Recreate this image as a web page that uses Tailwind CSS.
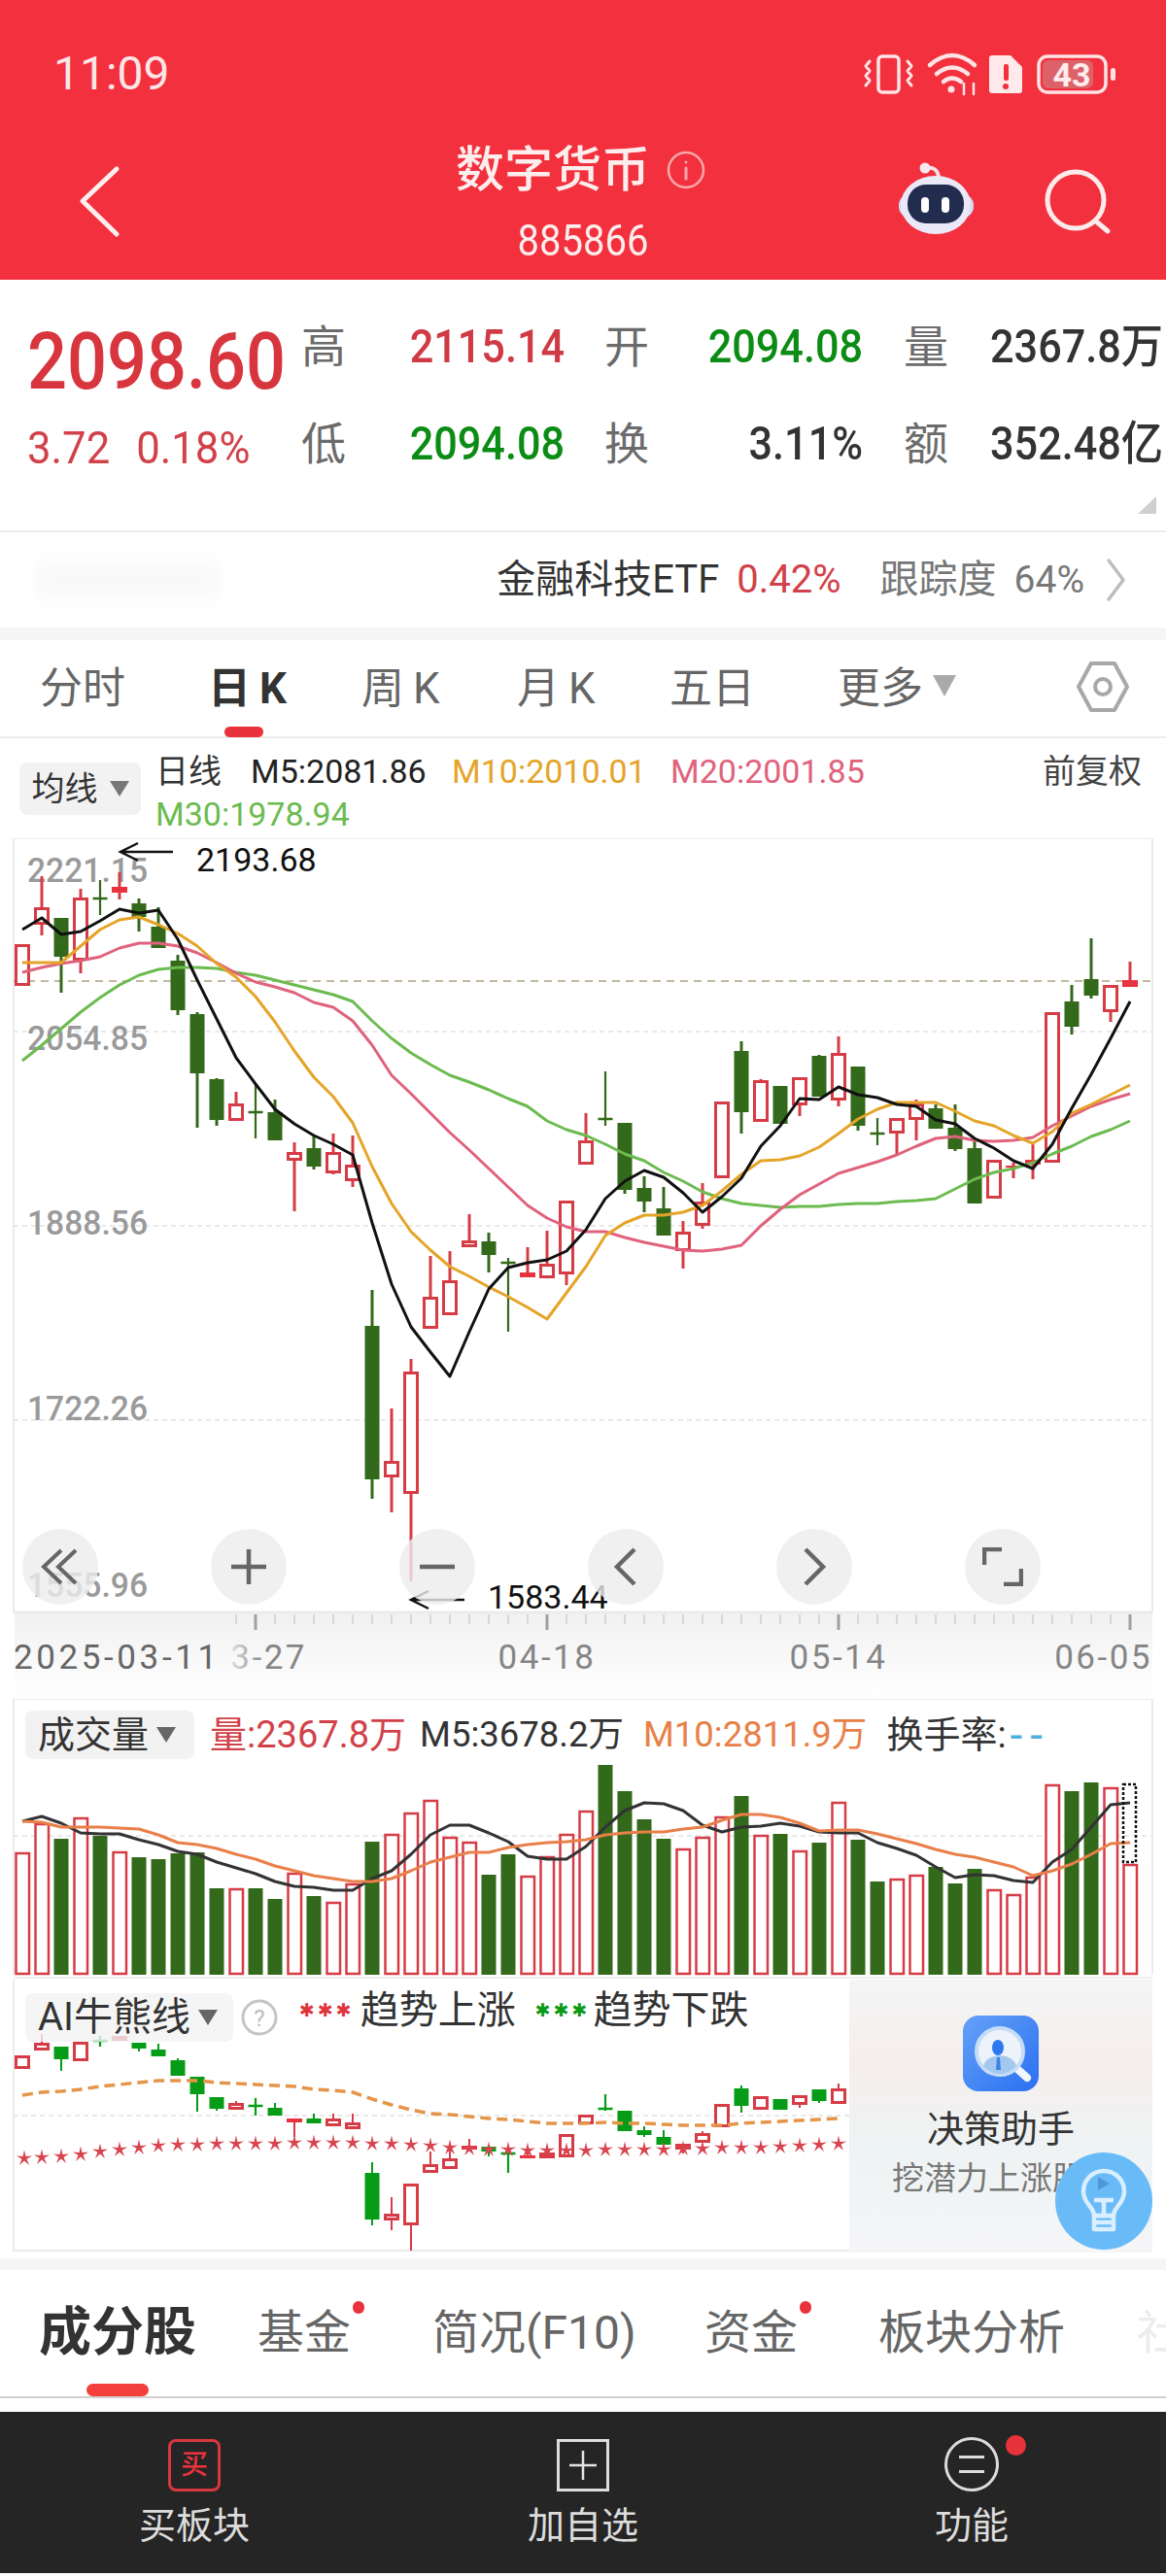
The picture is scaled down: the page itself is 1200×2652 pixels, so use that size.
<!DOCTYPE html>
<html lang="zh">
<head>
    <meta charset="UTF-8">
    <meta name="viewport" content="width=device-width, initial-scale=1.0">
    <title>数字货币</title>
    <script src="https://cdn.jsdelivr.net/npm/@tailwindcss/browser@4"></script>
</head>
<body class="bg-white font-['Roboto','Noto_Sans_CJK_SC',sans-serif]">
<div class="w-[1200px] h-[2652px] overflow-hidden flex flex-col">

    <!-- header -->
    <header class="relative h-[288px] shrink-0 bg-[#f3303d] text-white flex flex-col">
        <div class="h-[150px] flex items-start justify-between pl-[55px] pr-[50px] pt-[50px]">
            <span class="text-[48px] leading-[52px] text-[#fbe6e7]">11:09</span>
            <svg width="290" height="70" viewBox="880 40 290 70" class="-mt-[10px] -mr-[20px]" fill="none" stroke="#ffe4e6" stroke-linecap="round" stroke-linejoin="round">
                <rect x="904" y="58" width="21" height="37" rx="4" stroke-width="3.5"/>
                <path d="M895 63l-4 5 4 5-4 5 4 5-4 5M934 63l4 5-4 5 4 5-4 5 4 5" stroke-width="3"/>
                <path d="M957 67q23-20 46 0M964 76q16-13 32 0M971 84q9-7 18 0" stroke-width="4.5"/>
                <circle cx="979" cy="92" r="3.5" fill="#ffe4e6" stroke="none"/>
                <path d="M992 86v11M1002 86v11" stroke-width="2.5"/>
                <path d="M1018 60a3 3 0 0 1 3-3h19l12 12v24a3 3 0 0 1-3 3h-28a3 3 0 0 1-3-3z" fill="#ffe9ea" stroke="none"/>
                <rect x="1033" y="66" width="5" height="17" rx="2" fill="#f3303d" stroke="none"/>
                <circle cx="1035" cy="89" r="3" fill="#f3303d" stroke="none"/>
                <rect x="1069" y="58" width="69" height="37" rx="9" stroke-width="3.5"/>
                <rect x="1073" y="62" width="52" height="29" rx="6" fill="#dd6169" stroke="none"/>
                <rect x="1143" y="70" width="5" height="13" rx="2.5" fill="#ffe4e6" stroke="none"/>
                <text x="1103" y="89" text-anchor="middle" font-size="34" font-weight="700" fill="#ffecec" stroke="none">43</text>
            </svg>
        </div>
        <div class="flex-1 flex flex-col items-center">
            <div class="flex items-center h-[50px] mr-[4px]">
                <span class="text-[50px] leading-[50px] font-medium text-[#fdeeee]">数字货币</span>
                <svg width="42" height="42" viewBox="0 0 42 42" class="ml-[16px]" fill="none" stroke="#f8a7ab" stroke-width="2.5" stroke-linecap="round">
                    <circle cx="21" cy="21" r="18"/><path d="M21 19v11" stroke-width="3"/><circle cx="21" cy="13" r="1.5" fill="#f8a7ab" stroke="none"/>
                </svg>
            </div>
            <span class="text-[40px] leading-[46px] mt-[26px] text-[#fdeeee] scale-y-110">885866</span>
        </div>
        <svg class="absolute left-[78px] top-[168px]" width="50" height="78" viewBox="0 0 50 78" fill="none" stroke="#fdeeee" stroke-width="5" stroke-linecap="round" stroke-linejoin="round">
            <path d="M42 6L7 39l35 34"/>
        </svg>
        <svg class="absolute left-[920px] top-[165px]" width="90" height="80" viewBox="920 165 90 80">
            <path d="M953 173q12-2 13 10" fill="none" stroke="#f3dfe6" stroke-width="4"/>
            <circle cx="952" cy="173" r="5.5" fill="#f6e8ee"/>
            <rect x="925" y="200" width="77" height="24" rx="11" fill="#d6d8f2"/>
            <ellipse cx="963" cy="211" rx="36" ry="30" fill="#ebe9f8"/>
            <rect x="934" y="190" width="58" height="40" rx="19" fill="#212c4e"/>
            <rect x="948" y="203" width="8" height="16" rx="4" fill="#fff"/>
            <rect x="969" y="203" width="8" height="16" rx="4" fill="#fff"/>
        </svg>
        <svg class="absolute left-[1070px] top-[170px]" width="80" height="76" viewBox="1070 170 80 76" fill="none" stroke="#ffeaec" stroke-width="5" stroke-linecap="round">
            <circle cx="1107" cy="206" r="29"/><path d="M1127 227l13 11"/>
        </svg>
    </header>

    <!-- quote -->
    <section class="relative h-[260px] shrink-0 flex border-b-2 border-[#ececec]">
        <div class="w-[312px] shrink-0 pl-[28px] pt-[44px] text-[#d8363f]">
            <div class="text-[82px] leading-[80px] font-medium origin-left scale-x-[.88] whitespace-nowrap">2098.60</div>
            <div class="mt-[24px] flex text-[47px] leading-[50px] origin-left scale-x-[.93] whitespace-nowrap text-[#d2414a]">
                <span>3.72</span><span class="ml-[29px]">0.18%</span>
            </div>
        </div>
        <div class="grid grid-cols-[45px_224px_87px_220px_88px_221px] grid-rows-[100px_100px] pt-[19px] items-center text-[48px] font-medium leading-none">
            <span class="text-[#6b6b6b] text-[46px] font-normal -ml-[2px]">高</span>
            <span class="text-right text-[#cf3a44] origin-right scale-x-[.9]">2115.14</span>
            <span class="text-right text-[#6b6b6b] text-[46px] font-normal">开</span>
            <span class="text-right text-[#0b8c14] origin-right scale-x-[.9]">2094.08</span>
            <span class="text-right text-[#6b6b6b] text-[46px] font-normal">量</span>
            <span class="text-right text-[#333] origin-right scale-x-[.9] whitespace-nowrap">2367.8万</span>
            <span class="text-[#6b6b6b] text-[46px] font-normal -ml-[2px]">低</span>
            <span class="text-right text-[#0b8c14] origin-right scale-x-[.9]">2094.08</span>
            <span class="text-right text-[#6b6b6b] text-[46px] font-normal">换</span>
            <span class="text-right text-[#333] origin-right scale-x-[.9]">3.11%</span>
            <span class="text-right text-[#6b6b6b] text-[46px] font-normal">额</span>
            <span class="text-right text-[#333] origin-right scale-x-[.9] whitespace-nowrap">352.48亿</span>
        </div>
        <svg class="absolute right-[8px] bottom-[16px]" width="22" height="20" viewBox="0 0 22 20"><path d="M20 1v18H1z" fill="#cfcfcf"/></svg>
    </section>

    <!-- tracking ETF -->
    <section class="relative h-[98px] shrink-0 flex items-center justify-end pr-[40px] text-[40px] leading-none">
        <div class="absolute left-[36px] top-[30px] w-[190px] h-[38px] bg-[#f9f9f9] blur-sm"></div>
        <span class="text-[#333]">金融科技ETF</span>
        <span class="ml-[18px] text-[#d2414a]">0.42%</span>
        <span class="ml-[40px] text-[#777]">跟踪度</span>
        <span class="ml-[18px] text-[#777] text-[39px]">64%</span>
        <svg class="ml-[22px]" width="22" height="46" viewBox="0 0 22 46" fill="none" stroke="#bdbdbd" stroke-width="3.5" stroke-linecap="round" stroke-linejoin="round"><path d="M3 3l15 20-15 20"/></svg>
    </section>
    <div class="h-[13px] shrink-0 bg-[#f5f5f5]"></div>

    <!-- period tabs -->
    <nav class="relative h-[101px] shrink-0 border-b-2 border-[#ececec] flex items-center text-[44px] leading-none text-[#666]">
        <span class="ml-[41px] w-[173px]">分时</span>
        <span class="w-[158px] font-bold text-[#333]">日<span class="ml-[9px]">K</span></span>
        <span class="w-[160px]">周<span class="ml-[9px]">K</span></span>
        <span class="w-[157px]">月<span class="ml-[9px]">K</span></span>
        <span class="w-[173px]">五日</span>
        <span>更多</span>
        <svg class="ml-[10px] -mt-[6px]" width="24" height="22" viewBox="0 0 24 22"><path d="M0 0h24L12 22z" fill="#aaa"/></svg>
        <svg class="absolute left-[1107px] top-[20px]" width="56" height="56" viewBox="0 0 56 56" fill="none" stroke="#a8a8a8" stroke-width="4" stroke-linejoin="round">
            <path d="M16 4h24l13 24-13 24H16L3 28z"/><circle cx="28" cy="28" r="8"/>
        </svg>
        <div class="absolute left-[231px] top-[89px] w-[40px] h-[11px] rounded-full bg-[#e8333b]"></div>
    </nav>

    <!-- MA legend -->
    <section class="h-[103px] shrink-0 flex items-start pl-[20px] pt-[25px] text-[34px] leading-[40px]">
        <div class="w-[125px] h-[54px] flex items-center justify-center rounded-lg bg-[#f2f2f2] text-[#333] text-[34px]">
            均线<svg class="ml-[12px]" width="20" height="16" viewBox="0 0 20 16"><path d="M0 0h20L10 16z" fill="#777"/></svg>
        </div>
        <div class="ml-[15px] w-[1040px] -mt-[14px]">
            <div class="flex h-[46px] items-center whitespace-nowrap">
                <span class="text-[#333] w-[98px]">日线</span>
                <span class="text-[#222] w-[207px]">M5:2081.86</span>
                <span class="text-[#e5a428] w-[225px]">M10:2010.01</span>
                <span class="text-[#e0627c] w-[383px]">M20:2001.85</span>
                <span class="text-[#444]">前复权</span>
            </div>
            <div class="text-[#6cbb50] h-[42px] flex items-center">M30:1978.94</div>
        </div>
    </section>

    <!-- k-line chart -->
    <section class="relative h-[886px] shrink-0">
        <svg id="kline" class="block" width="1200" height="886" viewBox="0 864 1200 886">
            <defs>
                <linearGradient id="axisBg" x1="0" y1="0" x2="0" y2="1"><stop offset="0" stop-color="#f1f1f1"/><stop offset="1" stop-color="#fff"/></linearGradient>
                <linearGradient id="fadeDate" gradientUnits="userSpaceOnUse" x1="225" y1="0" x2="272" y2="0"><stop offset="0" stop-color="#fff"/><stop offset="1" stop-color="#858585"/></linearGradient>
            </defs>
        </svg>
        <!-- chart controls -->
        <div class="absolute left-[23px] top-[711px] w-[1048px] flex justify-between">
            <div class="w-[78px] h-[78px] rounded-full bg-[#ececec]/80 flex items-center justify-center">
                <svg width="40" height="40" viewBox="0 0 40 40" fill="none" stroke="#666" stroke-width="4"><path d="M21 3L3 20l18 17M36 3L18 20l18 17"/></svg>
            </div>
            <div class="w-[78px] h-[78px] rounded-full bg-[#ececec]/80 flex items-center justify-center">
                <svg width="38" height="38" viewBox="0 0 38 38" fill="none" stroke="#666" stroke-width="4.5"><path d="M1 19h36M19 1v36"/></svg>
            </div>
            <div class="w-[78px] h-[78px] rounded-full bg-[#ececec]/80 flex items-center justify-center">
                <svg width="38" height="8" viewBox="0 0 38 8" fill="none" stroke="#666" stroke-width="4.5"><path d="M1 4h36"/></svg>
            </div>
            <div class="w-[78px] h-[78px] rounded-full bg-[#ececec]/80 flex items-center justify-center">
                <svg width="26" height="40" viewBox="0 0 26 40" fill="none" stroke="#666" stroke-width="4.5"><path d="M22 2L4 20l18 18"/></svg>
            </div>
            <div class="w-[78px] h-[78px] rounded-full bg-[#ececec]/80 flex items-center justify-center">
                <svg width="26" height="40" viewBox="0 0 26 40" fill="none" stroke="#666" stroke-width="4.5"><path d="M4 2l18 18L4 38"/></svg>
            </div>
            <div class="w-[78px] h-[78px] rounded-full bg-[#ececec]/80 flex items-center justify-center">
                <svg width="42" height="40" viewBox="0 0 42 40" fill="none" stroke="#666" stroke-width="4.5"><path d="M2 18V2h18M40 22v16H22"/></svg>
            </div>
        </div>
    </section>

    <!-- volume panel -->
    <section class="relative h-[289px] shrink-0">
        <svg id="volume" class="block" width="1200" height="289" viewBox="0 1750 1200 289"></svg>
        <div class="absolute left-[26px] top-[12px] flex items-center text-[36px] leading-none whitespace-nowrap">
            <div class="w-[174px] h-[50px] rounded-lg bg-[#f2f2f2] flex items-center pl-[13px] text-[#333] text-[38px]">成交量<svg class="ml-[8px]" width="20" height="16" viewBox="0 0 20 16"><path d="M0 0h20L10 16z" fill="#666"/></svg></div>
            <span class="ml-[16px] text-[#d2414a] text-[38px]">量:2367.8万</span>
            <span class="ml-[14px] text-[#333] text-[36.5px]">M5:3678.2万</span>
            <span class="ml-[20px] text-[#e97f49] text-[36.5px]">M10:2811.9万</span>
            <span class="ml-[20px] text-[#333] text-[38px]">换手率:</span>
            <span class="ml-[4px] text-[#4fb0e0] text-[46px] tracking-[8px]">--</span>
        </div>
    </section>

    <!-- AI bull/bear panel -->
    <section class="relative h-[287px] shrink-0">
        <svg id="bull" class="block" width="1200" height="287" viewBox="0 2039 1200 287"></svg>
        <div class="absolute left-[26px] top-[14px] flex items-center leading-none whitespace-nowrap">
            <div class="w-[214px] h-[50px] rounded-lg bg-[#f2f2f2]/80 flex items-center pl-[13px] text-[40px] text-[#333]">AI牛熊线<svg class="ml-[8px]" width="20" height="16" viewBox="0 0 20 16"><path d="M0 0h20L10 16z" fill="#666"/></svg></div>
            <svg class="ml-[8px]" width="38" height="38" viewBox="0 0 38 38" fill="none" stroke="#c4c4c4" stroke-width="3"><circle cx="19" cy="19" r="17"/><text x="19" y="28" text-anchor="middle" font-size="24" fill="#bbb" stroke="none">?</text></svg>
            <div class="ml-[22px] -mt-[15px] flex items-center">
                <span class="text-[#e0333c] text-[19px] tracking-[3px] font-['DejaVu_Sans']">✱✱✱</span>
                <span class="ml-[6px] text-[40px] text-[#333]">趋势上涨</span>
                <span class="ml-[20px] text-[#0b9a16] text-[19px] tracking-[3px] font-['DejaVu_Sans']">✱✱✱</span>
                <span class="ml-[3px] text-[40px] text-[#333]">趋势下跌</span>
            </div>
        </div>
        <!-- assistant card covers the right of the panel -->
        <div class="absolute left-[874px] top-0 w-[312px] h-[281px] bg-[linear-gradient(180deg,#f4f5f5_0%,#f6eeee_30%,#eef3f3_62%,#f5f5f7_100%)] flex flex-col items-center pt-[37px]">
            <svg width="78" height="78" viewBox="991 2076 78 78">
                <defs><linearGradient id="blueIcon" x1="0" y1="0" x2="1" y2="1"><stop offset="0" stop-color="#64a2f8"/><stop offset="1" stop-color="#2a6ff0"/></linearGradient></defs>
                <rect x="991" y="2076" width="78" height="78" rx="16" fill="url(#blueIcon)"/>
                <path d="M1047 2131l10 9" stroke="#f2f6fd" stroke-width="8" stroke-linecap="round"/>
                <circle cx="1029" cy="2113" r="24" fill="#edf3fb" stroke="#c5dcf6" stroke-width="4"/>
                <path d="M1012 2128q3-10 17-11 14 1 17 11-8 8-17 8t-17-8z" fill="#a3c8f0"/>
                <ellipse cx="1027" cy="2109" rx="6" ry="8" fill="#2f79ef"/>
                <path d="M1026 2119h3l1 13h-5z" fill="#3f83e8"/>
            </svg>
            <span class="mt-[17px] text-[38px] leading-[44px] text-[#333]">决策助手</span>
            <span class="mt-[9px] -ml-[26px] text-[33px] leading-[40px] text-[#777] whitespace-nowrap">挖潜力上涨股</span>
        </div>
        <svg class="absolute left-[1085px] top-[177px]" width="102" height="102" viewBox="1085 2216 102 102" fill="none" stroke="#d9efff" stroke-width="4.5" stroke-linejoin="round">
            <circle cx="1136" cy="2267" r="50" fill="#69bbf8" stroke="none"/>
            <path d="M1130 2242l12 7-12 7z" fill="#4a8fd0" stroke="none" opacity=".8"/>
            <path d="M1126 2282c0-9-11-12-11-25a21 21 0 0 1 42 0c0 13-11 16-11 25z"/>
            <path d="M1126 2266h20M1136 2266v16M1126 2282h20v14h-20zM1126 2289h20"/>
        </svg>
    </section>

    <div class="h-[12px] shrink-0 bg-[#f5f5f5]"></div>

    <!-- detail tabs -->
    <nav class="relative h-[132px] shrink-0 border-b-2 border-[#d0d0d0] flex items-center pl-[40px] text-[48px] leading-none text-[#666] whitespace-nowrap overflow-hidden">
        <span class="w-[225px] shrink-0 text-[54px] font-bold text-[#333]">成分股</span>
        <span class="w-[180px] shrink-0">基金</span>
        <span class="w-[280px] shrink-0">简况(F10)</span>
        <span class="w-[179px] shrink-0">资金</span>
        <span class="w-[266px] shrink-0">板块分析</span>
        <span class="shrink-0 text-[#ececec]">社区</span>
        <div class="absolute left-[363px] top-[32px] w-[12px] h-[13px] rounded-full bg-[#e8333b]"></div>
        <div class="absolute left-[823px] top-[32px] w-[12px] h-[13px] rounded-full bg-[#e8333b]"></div>
        <div class="absolute left-[89px] top-[117px] w-[64px] h-[13px] rounded-full bg-[#f3403d]"></div>
    </nav>
    <div class="h-[14px] shrink-0"></div>

    <!-- bottom bar -->
    <footer class="h-[166px] shrink-0 bg-[#252525] flex text-[38px] leading-none text-[#dcdcdc]">
        <div class="w-[400px] flex flex-col items-center pt-[28px]">
            <div class="w-[54px] h-[54px] rounded-lg border-[3px] border-[#d9363f] flex items-center justify-center text-[28px] font-medium text-[#e8333b]">买</div>
            <span class="mt-[16px]">买板块</span>
        </div>
        <div class="w-[400px] flex flex-col items-center pt-[28px]">
            <div class="w-[54px] h-[54px] border-[3px] border-[#dcdcdc] flex items-center justify-center">
                <svg width="28" height="30" viewBox="0 0 28 30" fill="none" stroke="#e4e4e4" stroke-width="2.5"><path d="M0 15h28M14 0v30"/></svg>
            </div>
            <span class="mt-[16px]">加自选</span>
        </div>
        <div class="w-[400px] flex flex-col items-center pt-[26px]">
            <div class="relative w-[56px] h-[56px] rounded-full border-[3px] border-[#dcdcdc] flex flex-col items-center justify-center gap-[12px]">
                <div class="w-[26px] h-[3px] bg-[#dcdcdc]"></div>
                <div class="w-[26px] h-[3px] bg-[#dcdcdc]"></div>
                <div class="absolute left-[60px] -top-[5px] w-[21px] h-[21px] rounded-full bg-[#e8333b]"></div>
            </div>
            <span class="mt-[16px]">功能</span>
        </div>
    </footer>
</div>

<script>
    const RED = '#d63c46', GREEN = '#33691a', FLAT = '#e8333f', AIGREEN = '#079c17';
    const xAt = i => 23 + i * 20;

    // [wick top, body top, body bottom, wick bottom, kind]
    const kline = [
        [973,973,1016,1016,'r'],[903,935,953,964,'r'],[946,946,986,1023,'g'],[916,925,990,1003,'r'],[907,926,926,943,'d'],
        [899,914,920,927,'f'],[926,931,945,960,'g'],[935,955,977,977,'g'],[984,990,1041,1046,'g'],[1043,1045,1106,1162,'g'],
        [1111,1112,1154,1160,'g'],[1125,1137,1155,1155,'r'],[1117,1146,1146,1173,'d'],[1133,1146,1175,1175,'g'],[1177,1187,1196,1248,'r'],
        [1171,1183,1202,1205,'g'],[1168,1187,1209,1210,'r'],[1170,1200,1217,1223,'r'],[1329,1366,1524,1544,'g'],[1451,1505,1522,1558,'r'],
        [1400,1413,1539,1629,'r'],[1294,1336,1369,1369,'r'],[1289,1319,1355,1355,'r'],[1251,1278,1285,1285,'r'],[1270,1279,1293,1311,'g'],
        [1296,1301,1301,1372,'d'],[1285,1311,1316,1316,'f'],[1268,1302,1317,1317,'r'],[1237,1237,1313,1324,'r'],[1147,1175,1200,1200,'r'],
        [1104,1153,1153,1160,'d'],[1157,1157,1226,1230,'g'],[1212,1224,1238,1249,'g'],[1223,1245,1273,1273,'g'],[1258,1269,1289,1307,'r'],
        [1219,1238,1263,1266,'r'],[1135,1135,1214,1214,'r'],[1073,1083,1146,1168,'g'],[1112,1113,1156,1156,'r'],[1119,1119,1158,1158,'g'],
        [1110,1110,1139,1150,'r'],[1087,1088,1130,1130,'g'],[1068,1085,1134,1140,'r'],[1099,1099,1160,1165,'g'],[1152,1168,1168,1180,'d'],
        [1152,1152,1168,1189,'r'],[1133,1137,1154,1175,'r'],[1138,1142,1163,1163,'g'],[1138,1162,1184,1186,'g'],[1175,1183,1240,1240,'g'],
        [1195,1195,1235,1235,'r'],[1198,1201,1203,1214,'f'],[1179,1195,1200,1215,'f'],[1043,1043,1198,1198,'r'],[1015,1032,1058,1066,'g'],
        [967,1009,1026,1029,'g'],[1015,1015,1043,1053,'r'],[991,1010,1017,1017,'f']
    ];
    const m5 = [958,946,963,960,949,937,941,938,968,1010,1050,1090,1117,1143,1158,1170,1179,1190,1260,1323,1367,1393,1418,1372,1328,1306,1301,1298,1289,1267,1235,1217,1206,1213,1229,1249,1233,1214,1181,1160,1132,1133,1120,1128,1131,1138,1140,1154,1158,1173,1183,1196,1204,1179,1142,1107,1070,1032];
    const m10 = [992,992,992,975,958,948,945,953,962,975,993,1007,1027,1053,1083,1110,1130,1157,1202,1240,1269,1288,1305,1315,1326,1336,1347,1359,1332,1305,1273,1260,1252,1252,1249,1242,1227,1210,1196,1195,1191,1182,1168,1153,1143,1136,1136,1136,1145,1155,1160,1170,1178,1166,1147,1138,1128,1118];
    const m20 = [1002,997,993,990,986,977,972,972,975,982,992,1003,1012,1017,1023,1033,1038,1052,1077,1108,1127,1147,1167,1185,1204,1223,1242,1255,1264,1269,1269,1275,1280,1284,1288,1289,1287,1283,1263,1246,1231,1220,1209,1203,1197,1190,1181,1173,1171,1175,1176,1175,1172,1160,1150,1140,1133,1127];
    const m30 = [1093,1077,1060,1043,1028,1015,1005,999,997,997,998,1002,1005,1010,1015,1020,1025,1032,1052,1070,1085,1097,1108,1115,1123,1132,1140,1155,1164,1170,1179,1189,1196,1208,1217,1228,1235,1240,1242,1244,1243,1243,1241,1240,1240,1238,1237,1235,1225,1215,1208,1204,1198,1189,1181,1171,1164,1155];

    const volTops = [1908,1878,1894,1872,1891,1907,1913,1915,1909,1908,1945,1945,1945,1956,1929,1953,1959,1940,1897,1889,1867,1854,1892,1897,1931,1910,1932,1912,1889,1865,1818,1845,1874,1894,1904,1892,1871,1850,1890,1889,1906,1898,1856,1895,1938,1935,1931,1923,1940,1925,1946,1951,1933,1838,1845,1836,1841,1920];
    const volGreen = new Set([2,4,6,7,8,9,10,12,13,15,18,24,25,30,31,32,33,37,39,41,43,44,47,48,49,54,55]);
    const volM5 = [1876,1871,1878,1888,1889,1889,1895,1900,1907,1910,1918,1924,1930,1938,1943,1944,1947,1947,1935,1927,1910,1890,1880,1880,1888,1897,1912,1915,1915,1902,1882,1865,1857,1858,1865,1880,1887,1882,1881,1878,1881,1887,1888,1888,1898,1904,1911,1923,1934,1931,1932,1937,1939,1918,1905,1882,1859,1857];
    const volM10 = [1876,1877,1882,1882,1882,1883,1884,1890,1898,1900,1904,1910,1915,1922,1927,1932,1935,1938,1938,1935,1927,1918,1913,1908,1908,1903,1900,1898,1897,1895,1890,1888,1887,1887,1884,1882,1875,1869,1869,1872,1878,1886,1885,1885,1889,1894,1899,1905,1910,1913,1918,1923,1932,1927,1920,1910,1899,1898];

    const ai = [
        [2117,2117,2131,2131,'r'],[2095,2104,2112,2112,'r'],[2108,2108,2121,2133,'g'],[2103,2103,2123,2123,'r'],[2097,2102,2102,2108,'d'],
        [2097,2097,2102,2102,'r'],[2104,2104,2110,2113,'g'],[2105,2111,2118,2118,'g'],[2120,2122,2138,2138,'g'],[2139,2139,2157,2175,'g'],
        [2160,2160,2172,2174,'g'],[2164,2166,2173,2173,'r'],[2161,2169,2169,2179,'d'],[2166,2171,2179,2179,'g'],[2182,2182,2186,2201,'f'],
        [2177,2182,2187,2187,'g'],[2177,2182,2190,2190,'r'],[2177,2186,2193,2193,'r'],[2227,2238,2286,2292,'g'],[2263,2280,2287,2297,'r'],
        [2249,2249,2292,2318,'r'],[2216,2229,2238,2238,'r'],[2214,2223,2234,2234,'r'],[2203,2210,2214,2214,'f'],[2211,2211,2216,2221,'g'],
        [2217,2218,2218,2238,'d'],[2213,2220,2223,2223,'f'],[2212,2217,2223,2223,'r'],[2198,2198,2222,2222,'r'],[2178,2178,2188,2188,'r'],
        [2157,2172,2172,2174,'d'],[2174,2174,2195,2195,'g'],[2190,2194,2199,2201,'g'],[2194,2201,2209,2209,'g'],[2208,2208,2214,2218,'r'],
        [2195,2197,2207,2207,'r'],[2167,2167,2191,2191,'r'],[2148,2151,2169,2176,'g'],[2159,2159,2173,2173,'r'],[2162,2162,2173,2173,'g'],
        [2158,2158,2168,2171,'r'],[2152,2152,2164,2166,'g'],[2146,2151,2167,2167,'r']
    ];
    const aiDash = [2158,2155,2154,2152,2149,2147,2145,2143,2143,2143,2145,2146,2147,2148,2149,2152,2153,2155,2162,2168,2173,2177,2178,2180,2182,2183,2185,2187,2187,2187,2186,2187,2187,2188,2189,2189,2189,2187,2186,2185,2184,2183,2182];
    const aiStars = [2223,2222,2221,2219,2216,2214,2212,2210,2209,2209,2208,2208,2208,2208,2207,2207,2207,2207,2208,2208,2209,2210,2212,2213,2214,2214,2215,2215,2215,2215,2214,2214,2214,2214,2213,2213,2212,2212,2212,2211,2210,2209,2208];

    const candles = (rows, green, wick) => rows.map((c, i) => {
        const [top, bt, bb, bottom, kind] = c, x = xAt(i);
        const col = kind === 'r' || kind === 'f' ? RED : green;
        let s = `<path d="M${x} ${top}V${bottom}" stroke="${col}" stroke-width="${kind === 'd' ? 2.2 : wick}"/>`;
        if (kind === 'r') s += `<rect x="${x - 6.5}" y="${bt + 1.5}" width="13" height="${Math.max(bb - bt - 3, 2)}" fill="#fff" stroke="${col}" stroke-width="3"/>`;
        if (kind === 'f') s += `<rect x="${x - 8}" y="${bt}" width="16" height="${bb - bt}" fill="${FLAT}"/>`;
        if (kind === 'g') s += `<rect x="${x - 7.5}" y="${bt}" width="15" height="${bb - bt}" fill="${col}"/>`;
        if (kind === 'd') s += `<path d="M${x - 7.5} ${bt}h15" stroke="${col}" stroke-width="2.5"/>`;
        return s;
    }).join('');
    const line = (ys, col, w = 3, extra = '') => `<polyline points="${ys.map((y, i) => xAt(i) + ',' + y).join(' ')}" fill="none" stroke="${col}" stroke-width="${w}" stroke-linejoin="round" ${extra}/>`;
    const dash = (y, x2, col = '#e2e2e2') => `<path d="M14 ${y}H${x2}" stroke="${col}" stroke-width="1.5" stroke-dasharray="5 4"/>`;
    const star = (x, y) => {
        const pts = [];
        for (let k = 0; k < 10; k++) {
            const r = k % 2 ? 2.6 : 8.5, a = -Math.PI / 2 + k * Math.PI / 5;
            pts.push((x + r * Math.cos(a)).toFixed(1) + ',' + (y + r * Math.sin(a)).toFixed(1));
        }
        return `<polygon points="${pts.join(' ')}" fill="#d8434e"/>`;
    };
    const label = (y, t) => `<text x="28" y="${y}" font-size="35" font-weight="500" fill="#9a9a9a" textLength="124" lengthAdjust="spacingAndGlyphs">${t}</text>`;
    const arrow = (x1, x2, y) => `<path d="M${x1} ${y}H${x2}M${x2 + 18} ${y - 9}L${x2} ${y}l18 9" fill="none" stroke="#111" stroke-width="2.5"/>`;

    // main chart
    let ticks = '';
    for (let i = 11; i < 58; i++) {
        const big = i === 12 || i === 27 || i === 42 || i === 57;
        ticks += `<path d="M${xAt(i)} 1663v${big ? 16 : 10}" stroke="${big ? '#a0a0a0' : '#cfcfcf'}" stroke-width="${big ? 3 : 1.5}"/>`;
    }
    document.getElementById('kline').insertAdjacentHTML('beforeend', `
        <rect x="15" y="1662" width="1171" height="88" fill="url(#axisBg)"/>
        <rect x="15" y="865" width="1171" height="796" fill="#fff"/>
        <path d="M14 1661V864H1186V1661" fill="none" stroke="#ebebeb" stroke-width="2"/>
        <path d="M14 1661H1186" stroke="#ebebeb" stroke-width="3"/>
        ${dash(1063, 1186)}${dash(1263, 1186)}${dash(1463, 1186)}
        ${dash(1011, 1186, '#c2b9a0').replace('1.5', '2').replace('5 4', '8 6')}
        ${label(909, '2221.15')}${label(1082, '2054.85')}${label(1272, '1888.56')}${label(1463, '1722.26')}${label(1645, '1555.96')}
        ${candles(kline, GREEN, 3)}
        ${line(m30, '#6cbb50')}${line(m20, '#e0627c')}${line(m10, '#e5a428')}${line(m5, '#111')}
        ${arrow(178, 124, 878)}
        <text x="202" y="898" font-size="34" fill="#111">2193.68</text>
        ${arrow(478, 423, 1648)}
        <text x="502" y="1657" font-size="34" fill="#111">1583.44</text>
        ${ticks}
        <text x="316" y="1719" text-anchor="end" font-size="35" letter-spacing="2.5" fill="url(#fadeDate)">3-27</text>
        <text x="14" y="1719" font-size="35" letter-spacing="3.6" fill="#666">2025-03-11</text>
        <text x="563" y="1719" text-anchor="middle" font-size="35" letter-spacing="2.5" fill="#858585">04-18</text>
        <text x="863" y="1719" text-anchor="middle" font-size="35" letter-spacing="2.5" fill="#858585">05-14</text>
        <text x="1186" y="1719" text-anchor="end" font-size="35" letter-spacing="2.5" fill="#858585">06-05</text>
    `);

    // volume bars
    const bars = volTops.map((top, i) => {
        const x = xAt(i);
        return volGreen.has(i)
            ? `<rect x="${x - 7.5}" y="${top}" width="15" height="${2034 - top}" fill="${GREEN}"/>`
            : `<rect x="${x - 6.5}" y="${top + 1}" width="13.5" height="${2032 - top}" fill="#fff" stroke="${RED}" stroke-width="2.5"/>`;
    }).join('');
    document.getElementById('volume').insertAdjacentHTML('beforeend', `
        <path d="M14 2034V1750H1186V2034" fill="none" stroke="#ebebeb" stroke-width="2"/>
        ${dash(1891, 1186)}
        ${bars}
        ${line(volM5, '#333')}${line(volM10, '#e97f49')}
        <rect x="1156" y="1838" width="13" height="80" fill="none" stroke="#111" stroke-width="2.5" stroke-dasharray="3 2"/>
        <path d="M14 2037H1186" stroke="#eee" stroke-width="2"/>
    `);

    // AI panel
    document.getElementById('bull').insertAdjacentHTML('beforeend', `
        <path d="M14 2039V2318H880" fill="none" stroke="#ebebeb" stroke-width="2"/>
        ${dash(2179, 880)}
        ${candles(ai, AIGREEN, 2)}
        ${line(aiDash, '#e5954a', 3.5, 'stroke-dasharray="11 6"')}
        ${aiStars.map((y, i) => star(xAt(i) + (i ? 0 : 2), y)).join('')}
    `);
</script>
</body>
</html>
